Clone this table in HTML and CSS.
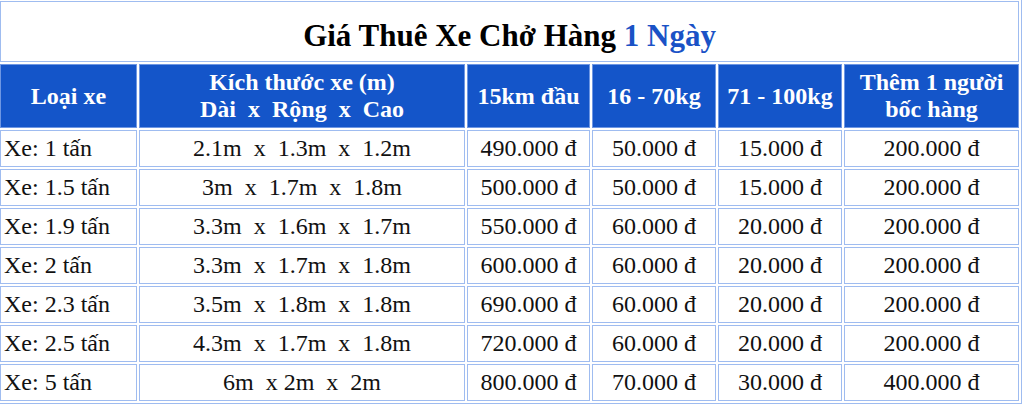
FILE: index.html
```html
<!DOCTYPE html>
<html lang="vi">
<head>
<meta charset="utf-8">
<link rel="stylesheet" href="styles.css">
</head>
<body>
<table class="price">
  <colgroup>
    <col class="c1"><col class="c2"><col class="c3"><col class="c4"><col class="c5"><col class="c6">
  </colgroup>
  <tr class="title-row"><td colspan="6" class="title">Giá Thuê Xe Chở Hàng <span class="blue">1 Ngày</span></td></tr>
  <tr class="head">
    <th>Loại xe</th>
    <th>Kích thước xe (m)<br>Dài&nbsp; x&nbsp; Rộng&nbsp; x&nbsp; Cao</th>
    <th>15km đầu</th>
    <th>16 - 70kg</th>
    <th>71 - 100kg</th>
    <th>Thêm 1 người<br>bốc hàng</th>
  </tr>
  <tr><td class="l">Xe: 1 tấn</td><td>2.1m&nbsp; x&nbsp; 1.3m&nbsp; x&nbsp; 1.2m</td><td>490.000 đ</td><td>50.000 đ</td><td>15.000 đ</td><td>200.000 đ</td></tr>
  <tr><td class="l">Xe: 1.5 tấn</td><td>3m&nbsp; x&nbsp; 1.7m&nbsp; x&nbsp; 1.8m</td><td>500.000 đ</td><td>50.000 đ</td><td>15.000 đ</td><td>200.000 đ</td></tr>
  <tr><td class="l">Xe: 1.9 tấn</td><td>3.3m&nbsp; x&nbsp; 1.6m&nbsp; x&nbsp; 1.7m</td><td>550.000 đ</td><td>60.000 đ</td><td>20.000 đ</td><td>200.000 đ</td></tr>
  <tr><td class="l">Xe: 2 tấn</td><td>3.3m&nbsp; x&nbsp; 1.7m&nbsp; x&nbsp; 1.8m</td><td>600.000 đ</td><td>60.000 đ</td><td>20.000 đ</td><td>200.000 đ</td></tr>
  <tr><td class="l">Xe: 2.3 tấn</td><td>3.5m&nbsp; x&nbsp; 1.8m&nbsp; x&nbsp; 1.8m</td><td>690.000 đ</td><td>60.000 đ</td><td>20.000 đ</td><td>200.000 đ</td></tr>
  <tr><td class="l">Xe: 2.5 tấn</td><td>4.3m&nbsp; x&nbsp; 1.7m&nbsp; x&nbsp; 1.8m</td><td>720.000 đ</td><td>60.000 đ</td><td>20.000 đ</td><td>200.000 đ</td></tr>
  <tr><td class="l">Xe: 5 tấn</td><td>6m&nbsp; x 2m&nbsp; x&nbsp; 2m</td><td>800.000 đ</td><td>70.000 đ</td><td>30.000 đ</td><td>400.000 đ</td></tr>
</table>
</body>
</html>
```

FILE: styles.css
```css
html, body {
  margin: 0;
  padding: 0;
  background: #ffffff;
  overflow: hidden;
}

.price {
  table-layout: fixed;
  width: 1025px;
  margin: -2px 0 0 -3px;
  border: 1px solid #9fbcf0;
  border-collapse: separate;
  border-spacing: 2px;
  font-family: "Liberation Serif", "Times New Roman", serif;
  font-size: 24px;
  color: #111111;
}

.c1 { width: 137px; }
.c2 { width: 326px; }
.c3 { width: 123px; }
.c4 { width: 124px; }
.c5 { width: 124px; }
.c6 { width: 175px; }

.price td, .price th {
  border: 1px solid #9fbcf0;
  padding: 0 3px;
  text-align: center;
  box-sizing: border-box;
  white-space: nowrap;
}

.price td.l {
  text-align: left;
}

.price tr { height: 37px; }

.price tr.title-row { height: 61px; }

.price td.title {
  font-size: 31px;
  font-weight: bold;
  color: #000000;
  padding-top: 9px;
}

.blue {
  color: #1a52c6;
}

.price tr.head { height: 64px; }

.price th {
  background: #1455c9;
  color: #ffffff;
  font-weight: bold;
  line-height: 27px;
  border-color: #6f97e3;
}
```
